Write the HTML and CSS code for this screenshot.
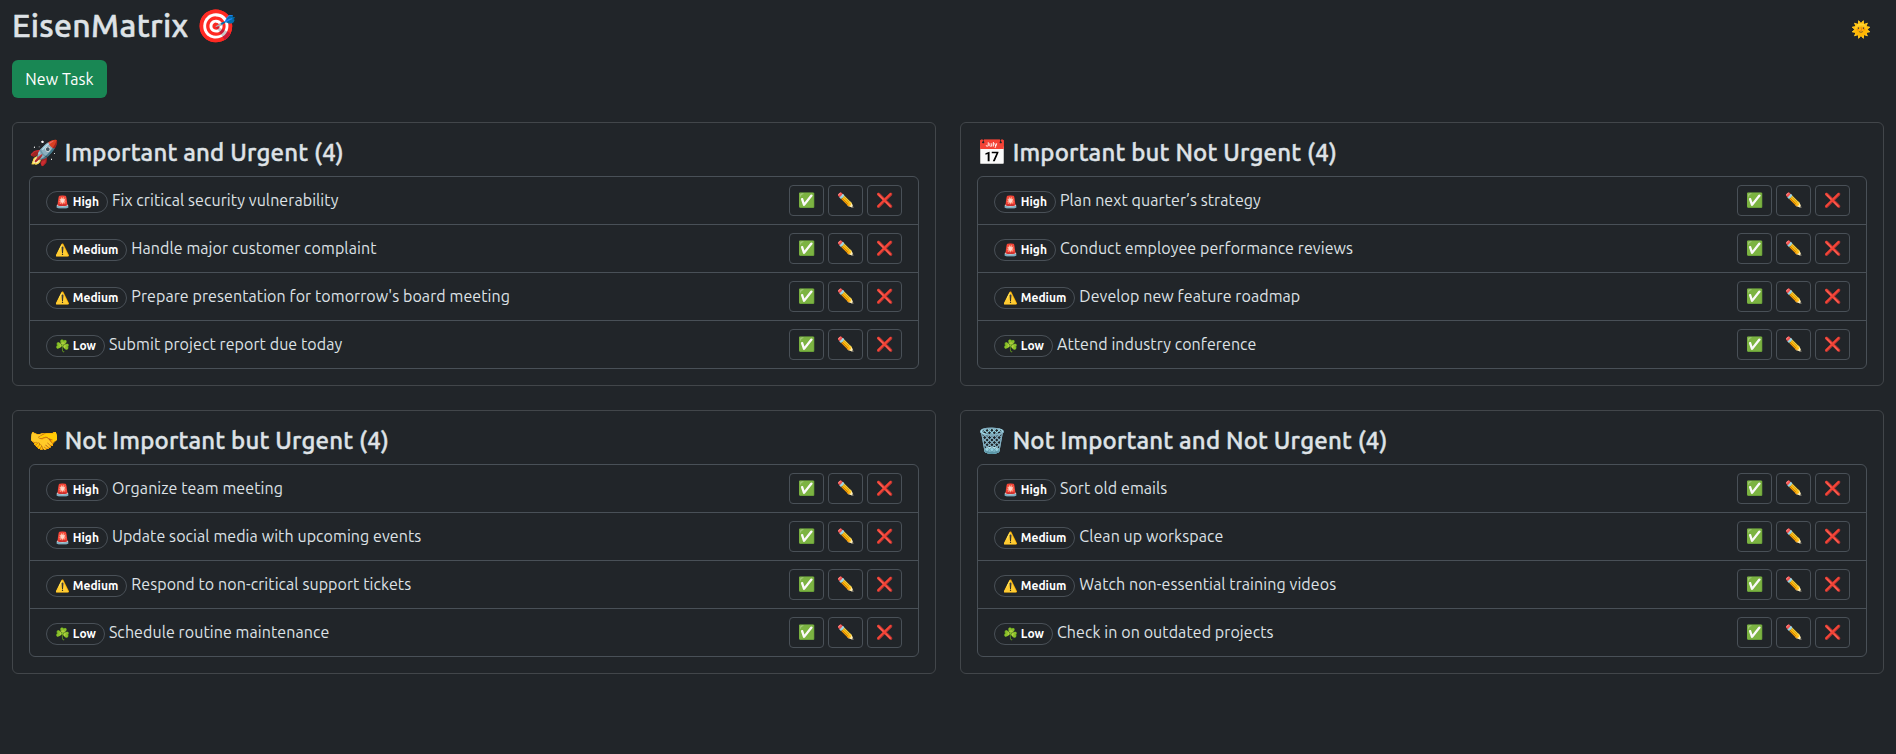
FILE: index.html
```html
<!DOCTYPE html>
<html lang="en">
<head>
<meta charset="utf-8">
<title>EisenMatrix</title>
<link rel="stylesheet" href="styles.css">
</head>
<body>
<header class="topbar"><h1 class="brand"><span class="brand-name">EisenMatrix</span> <span class="emoji">🎯</span></h1><button class="theme emoji">🌞</button></header>
<button class="new-task">New Task</button>
<main class="matrix">
<section class="card">
<h2 class="card-title"><span class="emoji">🚀</span> Important and Urgent (4)</h2>
<ul class="tasks">
<li class="task"><div class="label"><span class="badge high"><span class="emoji">🚨</span> High</span> <span class="name">Fix critical security vulnerability</span></div><div class="actions"><button class="emoji">✅</button><button class="emoji">✏️</button><button class="emoji">❌</button></div></li>
<li class="task"><div class="label"><span class="badge medium"><span class="emoji">⚠️</span> Medium</span> <span class="name">Handle major customer complaint</span></div><div class="actions"><button class="emoji">✅</button><button class="emoji">✏️</button><button class="emoji">❌</button></div></li>
<li class="task"><div class="label"><span class="badge medium"><span class="emoji">⚠️</span> Medium</span> <span class="name">Prepare presentation for tomorrow's board meeting</span></div><div class="actions"><button class="emoji">✅</button><button class="emoji">✏️</button><button class="emoji">❌</button></div></li>
<li class="task"><div class="label"><span class="badge low"><span class="emoji">☘️</span> Low</span> <span class="name">Submit project report due today</span></div><div class="actions"><button class="emoji">✅</button><button class="emoji">✏️</button><button class="emoji">❌</button></div></li>
</ul>
</section>
<section class="card">
<h2 class="card-title"><span class="emoji">📅</span> Important but Not Urgent (4)</h2>
<ul class="tasks">
<li class="task"><div class="label"><span class="badge high"><span class="emoji">🚨</span> High</span> <span class="name">Plan next quarter’s strategy</span></div><div class="actions"><button class="emoji">✅</button><button class="emoji">✏️</button><button class="emoji">❌</button></div></li>
<li class="task"><div class="label"><span class="badge high"><span class="emoji">🚨</span> High</span> <span class="name">Conduct employee performance reviews</span></div><div class="actions"><button class="emoji">✅</button><button class="emoji">✏️</button><button class="emoji">❌</button></div></li>
<li class="task"><div class="label"><span class="badge medium"><span class="emoji">⚠️</span> Medium</span> <span class="name">Develop new feature roadmap</span></div><div class="actions"><button class="emoji">✅</button><button class="emoji">✏️</button><button class="emoji">❌</button></div></li>
<li class="task"><div class="label"><span class="badge low"><span class="emoji">☘️</span> Low</span> <span class="name">Attend industry conference</span></div><div class="actions"><button class="emoji">✅</button><button class="emoji">✏️</button><button class="emoji">❌</button></div></li>
</ul>
</section>
<section class="card">
<h2 class="card-title"><span class="emoji">🤝</span> Not Important but Urgent (4)</h2>
<ul class="tasks">
<li class="task"><div class="label"><span class="badge high"><span class="emoji">🚨</span> High</span> <span class="name">Organize team meeting</span></div><div class="actions"><button class="emoji">✅</button><button class="emoji">✏️</button><button class="emoji">❌</button></div></li>
<li class="task"><div class="label"><span class="badge high"><span class="emoji">🚨</span> High</span> <span class="name">Update social media with upcoming events</span></div><div class="actions"><button class="emoji">✅</button><button class="emoji">✏️</button><button class="emoji">❌</button></div></li>
<li class="task"><div class="label"><span class="badge medium"><span class="emoji">⚠️</span> Medium</span> <span class="name">Respond to non-critical support tickets</span></div><div class="actions"><button class="emoji">✅</button><button class="emoji">✏️</button><button class="emoji">❌</button></div></li>
<li class="task"><div class="label"><span class="badge low"><span class="emoji">☘️</span> Low</span> <span class="name">Schedule routine maintenance</span></div><div class="actions"><button class="emoji">✅</button><button class="emoji">✏️</button><button class="emoji">❌</button></div></li>
</ul>
</section>
<section class="card">
<h2 class="card-title"><span class="emoji">🗑️</span> Not Important and Not Urgent (4)</h2>
<ul class="tasks">
<li class="task"><div class="label"><span class="badge high"><span class="emoji">🚨</span> High</span> <span class="name">Sort old emails</span></div><div class="actions"><button class="emoji">✅</button><button class="emoji">✏️</button><button class="emoji">❌</button></div></li>
<li class="task"><div class="label"><span class="badge medium"><span class="emoji">⚠️</span> Medium</span> <span class="name">Clean up workspace</span></div><div class="actions"><button class="emoji">✅</button><button class="emoji">✏️</button><button class="emoji">❌</button></div></li>
<li class="task"><div class="label"><span class="badge medium"><span class="emoji">⚠️</span> Medium</span> <span class="name">Watch non-essential training videos</span></div><div class="actions"><button class="emoji">✅</button><button class="emoji">✏️</button><button class="emoji">❌</button></div></li>
<li class="task"><div class="label"><span class="badge low"><span class="emoji">☘️</span> Low</span> <span class="name">Check in on outdated projects</span></div><div class="actions"><button class="emoji">✅</button><button class="emoji">✏️</button><button class="emoji">❌</button></div></li>
</ul>
</section>
</main>
</body>
</html>
```
FILE: styles.css
```css
* { box-sizing: border-box; }
body { margin: 0; padding: 6px 12px 0; background: #212529; color: #dee2e6; font: 16px/24px Ubuntu, "Noto Sans", sans-serif; }
button { font: inherit; color: inherit; background: none; border: 0; padding: 0; }
.emoji { font-family: "Noto Color Emoji", "Noto Sans", sans-serif; letter-spacing: 0; }
.topbar { display: flex; justify-content: space-between; align-items: flex-start; height: 54px; }
.brand { margin: 0; font-size: 32px; line-height: 38px; font-weight: 500; letter-spacing: 0.3px; -webkit-text-stroke: 0.5px; }
.theme { font-size: 16px; line-height: 24px; padding: 12px 13px 0; }
.new-task { display: block; height: 38px; width: 95px; border-radius: 6px; background: #198754; color: #fff; letter-spacing: 0.07px; }
.matrix { display: grid; grid-template-columns: 1fr 1fr; gap: 24px; margin-top: 24px; }
.card { height: 264px; border: 1px solid #42464a; border-radius: 6px; padding: 15px 16px 16px; }
.card-title { margin: 0 0 9px; height: 29px; font-size: 24px; line-height: 29px; font-weight: 500; letter-spacing: 0.18px; -webkit-text-stroke: 0.4px; white-space: nowrap; }
.tasks { list-style: none; margin: 0; padding: 0; border: 1px solid #495057; border-radius: 6px; }
.task { display: flex; justify-content: space-between; align-items: center; height: 48px; padding: 0 16px; border-top: 1px solid #495057; }
.task:first-child { border-top: 0; height: 47px; }
.label { display: flex; align-items: center; gap: 4px; white-space: nowrap; }
.name { letter-spacing: 0.08px; padding-bottom: 2px; }
.badge { font-size: 12px; line-height: 20px; height: 22px; margin-top: 2px; font-weight: 700; color: #fff; border: 1px solid #495057; border-radius: 11px; padding: 0 8px; }
.actions { display: flex; gap: 4px; }
.actions button { width: 35px; height: 31px; border: 1px solid #495057; border-radius: 4px; padding-left: 1px; font-size: 14px; line-height: 21px; }
```
